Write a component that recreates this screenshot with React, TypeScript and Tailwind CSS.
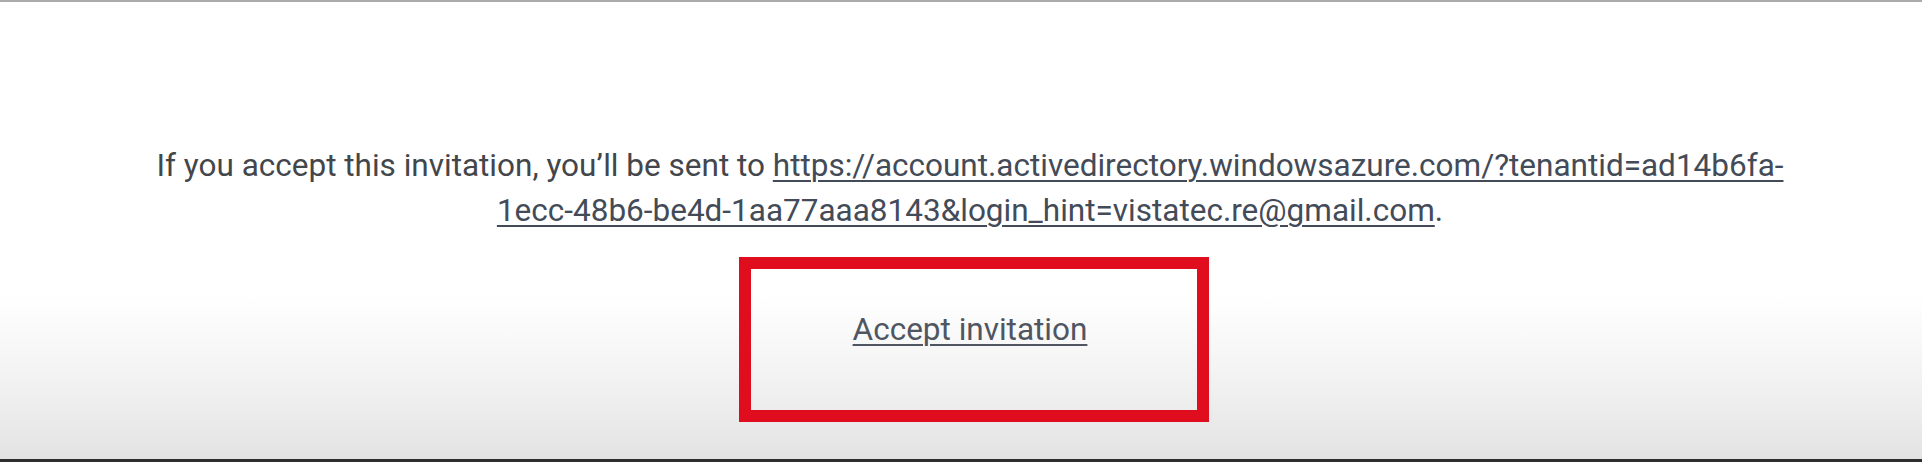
const App: React.FC = () => {
  return (
    <div
      className="h-[462px] w-full overflow-hidden border-t-2 border-t-[#ababab] border-b-[3px] border-b-[#2e2e2e] bg-[linear-gradient(to_bottom,#ffffff_0%,#ffffff_64%,#f4f4f4_80%,#e3e3e3_100%)]"
      style={{ fontFamily: "Roboto, 'Liberation Sans', sans-serif" }}
    >
      <div className="flex flex-col items-center pl-[18px] pt-[141px]">
        <p className="text-center text-[31.5px] leading-[45px] text-[#43464a]">
          If you accept this invitation, you’ll be sent to{" "}
          <a
            href="#"
            className="text-[#434b58] underline decoration-2 underline-offset-[4px]"
          >
            https://account.activedirectory.windowsazure.com/?tenantid=ad14b6fa-
            <br />
            1ecc-48b6-be4d-1aa77aaa8143&amp;login_hint=vistatec.re@gmail.com
          </a>
          .
        </p>

        <div className="ml-[8px] mt-[24px] h-[165px] w-[470px] border-[12px] border-[#e00d1f] pr-[8px] pt-[41px] text-center">
          <a
            href="#"
            className="text-[31.5px] leading-[40px] text-[#4f5661] underline decoration-2 underline-offset-[4px]"
          >
            Accept invitation
          </a>
        </div>
      </div>
    </div>
  );
};

export default App;
